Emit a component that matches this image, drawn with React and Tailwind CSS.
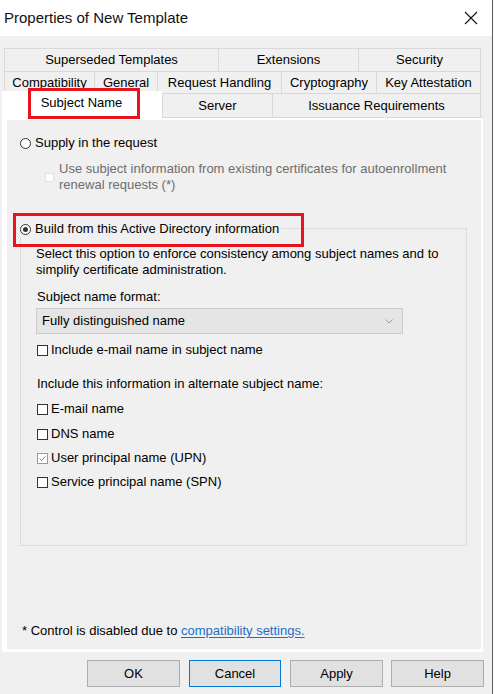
import React from "react";

function Radio({ checked }) {
  return (
    <span className="w-[11px] h-[11px] shrink-0 rounded-full border border-[#333] bg-white flex items-center justify-center">
      {checked && <span className="w-[5px] h-[5px] rounded-full bg-[#333]" />}
    </span>
  );
}

function Check({ checked }) {
  if (checked) {
    return (
      <span className="w-[11px] h-[11px] shrink-0 border border-[#9a9a9a] bg-white flex items-center justify-center">
        <svg width="9" height="9" viewBox="0 0 9 9">
          <path d="M1.5 4.5 L3.6 6.6 L7.6 2.2" fill="none" stroke="#8a8a8a" strokeWidth="1" />
        </svg>
      </span>
    );
  }
  return <span className="block w-[11px] h-[11px] shrink-0 border border-[#333] bg-white" />;
}

function Tab({ w, children, last }) {
  return (
    <div
      className={
        "h-full flex items-center justify-center border-t border-l border-[#d9d9d9] bg-[#f0f0f0] " +
        (last ? "border-r " : "")
      }
      style={{ width: w }}
    >
      {children}
    </div>
  );
}

function CheckRow({ checked, children, className }) {
  return (
    <div className={"flex items-center h-[16px] " + (className || "")}>
      <span className="ml-[1px] flex">
        <Check checked={checked} />
      </span>
      <span className="ml-[3px]">{children}</span>
    </div>
  );
}

export default function App() {
  return (
    <div className="w-[495px] h-[694px] bg-white flex font-['Liberation_Sans',Arial,sans-serif] text-[13px] leading-[16px] text-black overflow-hidden">
      <div className="w-[492px] h-full flex flex-col">
        {/* Title bar */}
        <div className="h-[36px] bg-white flex items-center justify-between pl-[4px] pr-[14px]">
          <span className="text-[15px] leading-[20px] text-[#111]">Properties of New Template</span>
          <svg width="14" height="14" viewBox="0 0 14 14">
            <path d="M1 1 L13 13 M13 1 L1 13" stroke="#111" strokeWidth="1.1" />
          </svg>
        </div>

        {/* Body */}
        <div className="flex-1 bg-[#f0f0f0] flex flex-col">
          {/* Tabs */}
          <div className="mt-[12px] flex flex-col">
            <div className="h-[23px] flex pl-[4px]">
              <Tab w={214}>Superseded Templates</Tab>
              <Tab w={140}>Extensions</Tab>
              <Tab w={123} last>Security</Tab>
            </div>
            <div className="h-[22px] flex pl-[4px]">
              <Tab w={90}>Compatibility</Tab>
              <Tab w={63}>General</Tab>
              <Tab w={124}>Request Handling</Tab>
              <Tab w={95}>Cryptography</Tab>
              <Tab w={105} last>Key Attestation</Tab>
            </div>
            <div className="h-[24px] flex pl-[2px]">
              <div className="relative z-10 w-[160px] h-[28px] -mt-[2px] bg-white flex items-start justify-center pt-[4px]">
                <span className="-ml-[1px]">Subject Name</span>
                <div className="absolute left-[26px] -top-[3px] w-[112px] h-[31px] border-[3px] border-[#e8141c]" />
              </div>
              <Tab w={110}>Server</Tab>
              <Tab w={209} last>Issuance Requirements</Tab>
            </div>
          </div>

          {/* Panel */}
          <div className="ml-[2px] w-[481px] h-[535px] bg-white pl-[5px] pt-[2px] pr-[2px] pb-[3px] border-t border-[#d9d9d9]">
            <div className="relative w-full h-full bg-[#f0f0f0] flex flex-col">
              <div className="absolute left-[6px] top-[93px] w-[291px] h-[34px] border-[3px] border-[#e8141c] z-10" />

              <div className="mt-[15px] ml-[13px] flex items-center h-[16px] gap-[4px]">
                <Radio />
                <span>Supply in the request</span>
              </div>

              <div className="mt-[10px] ml-[38px] flex items-center">
                <span className="block w-[9px] h-[9px] bg-white border border-[#e3e3e3] shrink-0" />
                <div className="ml-[5px] text-[#6d6d6d]">
                  <div>Use subject information from existing certificates for autoenrollment</div>
                  <div>renewal requests (*)</div>
                </div>
              </div>

              {/* Group box */}
              <div className="mt-[35px] ml-[13px] w-[447px] h-[318px] border border-[#dcdcdc] flex flex-col pl-[15px]">
                <div className="-mt-[8px] -ml-[16px] self-start bg-[#f0f0f0] flex items-center h-[16px] gap-[4px] pr-[2px]">
                  <Radio checked />
                  <span>Build from this Active Directory information</span>
                </div>
                <div className="mt-[9px]">
                  <div>Select this option to enforce consistency among subject names and to</div>
                  <div>simplify certificate administration.</div>
                </div>
                <div className="mt-[11px] ml-[1px]">Subject name format:</div>
                <div className="mt-[3px] w-[367px] h-[26px] bg-[#e5e5e5] border border-[#cccccc] flex items-center justify-between pl-[5px] pr-[9px]">
                  <span>Fully distinguished name</span>
                  <svg width="8" height="5" viewBox="0 0 8 5">
                    <path d="M0.5 0.5 L4 4 L7.5 0.5" fill="none" stroke="#9a9a9a" strokeWidth="1" />
                  </svg>
                </div>
                <CheckRow className="mt-[8px]">Include e-mail name in subject name</CheckRow>
                <div className="mt-[18px] ml-[1px]">Include this information in alternate subject name:</div>
                <CheckRow className="mt-[9px]">E-mail name</CheckRow>
                <CheckRow className="mt-[9px]">DNS name</CheckRow>
                <CheckRow className="mt-[8px]" checked>User principal name (UPN)</CheckRow>
                <CheckRow className="mt-[8px]">Service principal name (SPN)</CheckRow>
              </div>

              <div className="mt-[77px] ml-[15px]">
                * Control is disabled due to{" "}
                <span className="text-[#1a6fc9] underline underline-offset-2">compatibility settings.</span>
              </div>
            </div>
          </div>

          {/* Buttons */}
          <div className="mt-[8px] flex justify-end pr-[8px]">
            <button className="w-[93px] h-[27px] bg-[#e1e1e1] border border-[#adadad] mr-[9px]">OK</button>
            <button className="w-[92px] h-[27px] bg-[#e1e1e1] border border-[#0078d7] mr-[9px]">Cancel</button>
            <button className="w-[93px] h-[27px] bg-[#e1e1e1] border border-[#adadad] mr-[8px]">Apply</button>
            <button className="w-[93px] h-[27px] bg-[#e1e1e1] border border-[#adadad]">Help</button>
          </div>
        </div>
      </div>
      <div className="w-[1px] h-full bg-[#5a5a5a]" />
      <div className="w-[2px] h-full bg-white" />
    </div>
  );
}
